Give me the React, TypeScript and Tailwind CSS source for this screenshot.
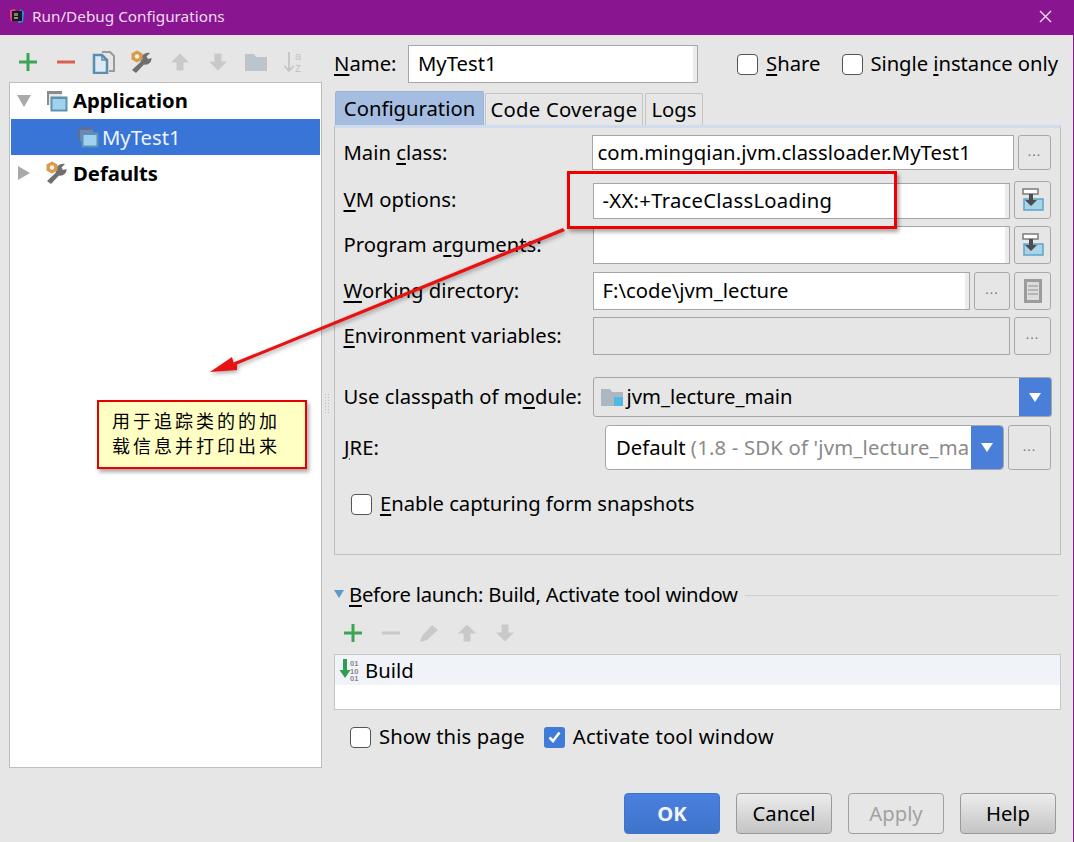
import React from "react";

const U = ({ children }: { children: React.ReactNode }) => <span className="underline underline-offset-[3px]">{children}</span>;

const Plus = ({ c = "#3aa655" }: { c?: string }) => (
  <svg width="20" height="20" viewBox="0 0 20 20"><path d="M1 10h18M10 1v18" stroke={c} strokeWidth="3" /></svg>
);
const Minus = ({ c = "#d9604c" }: { c?: string }) => (
  <svg width="20" height="20" viewBox="0 0 20 20"><path d="M1 10h18" stroke={c} strokeWidth="3" /></svg>
);
const Up = () => (
  <svg width="20" height="20" viewBox="0 0 20 20"><path d="M10 1.500 19 10.500h-5.500v8h-7v-8H1z" fill="#c9c9c9" /></svg>
);
const Down = () => (
  <svg width="20" height="20" viewBox="0 0 20 20"><path d="M10 18.500 19 9.500h-5.500v-8h-7v8H1z" fill="#c9c9c9" /></svg>
);
const Copy = () => (
  <svg width="24" height="24" viewBox="0 0 24 24">
    <path d="M10 2h8l4 4v15h-5" fill="#e6e6e6" stroke="#9a9a9a" strokeWidth="2" />
    <path d="M2 5h8l5 5v13H2z" fill="#dfe9f1" stroke="#5b8db0" strokeWidth="2.500" />
    <path d="M10 5v5h5" fill="none" stroke="#5b8db0" strokeWidth="1.500" />
  </svg>
);
const Wrench = () => (
  <svg width="24" height="24" viewBox="0 0 24 24">
    <path d="M11 10C11 5 15 2 20 3L16.500 6.500 18 9 21.500 8C22 12 18 15.500 14 14.500L6 23 2 20 10.500 12Z" fill="#6f6f6f" />
    <path d="M7 0.500l5.500 3v6l-5.500 3-5.500-3v-6z" fill="#d79b4b" />
    <circle cx="7" cy="6.500" r="2.200" fill="#f4f0e4" />
  </svg>
);
const Folder = ({ c = "#bcc5cc", w = 22, h = 18 }: { c?: string; w?: number; h?: number }) => (
  <svg width={w} height={h} viewBox="0 0 22 18"><path d="M0 1h9l2 3h11v14H0z" fill={c} /></svg>
);
const Sort = () => (
  <svg width="22" height="24" viewBox="0 0 22 24">
    <path d="M6 2v19M1.500 16 6 21l4.500-5" fill="none" stroke="#c4c4c4" strokeWidth="1.800" />
    <text x="12" y="10" fontSize="11" fill="#c4c4c4" fontFamily="Liberation Sans">a</text>
    <text x="12" y="22" fontSize="12" fill="#c4c4c4" fontFamily="Liberation Sans">z</text>
  </svg>
);
const AppIcon = ({ dim }: { dim?: boolean }) => (
  <svg width="22" height="22" viewBox="0 0 22 22">
    <path d="M1 1h15v3H1zM1 4h2v11H1z" fill={dim ? "#5f6f96" : "#8b8b8b"} />
    <rect x="3" y="4" width="13" height="11" fill={dim ? "#6d86bf" : "#e8e8e8"} />
    <rect x="5.500" y="7.500" width="15" height="13" fill="#9fd2ee" stroke="#5f93ad" strokeWidth="2" />
    <path d="M5 7h16v2H5z" fill="#5f93ad" />
  </svg>
);
const Insert = () => (
  <svg width="24" height="24" viewBox="0 0 24 24">
    <rect x="2" y="1" width="15" height="5" fill="#fff" stroke="#7b7b7b" strokeWidth="1.500" />
    <rect x="3" y="11" width="19" height="11" fill="#a8d4ea" stroke="#5da3c9" strokeWidth="1.500" />
    <path d="M8 6h4v6h4l-6 6-6-6h4z" fill="#4d4d4d" />
  </svg>
);
const DocIcon = () => (
  <svg width="18" height="24" viewBox="0 0 18 24">
    <rect x="1.500" y="1.500" width="15" height="21" fill="#dcdcdc" stroke="#9b9b9b" strokeWidth="3" />
    <path d="M4 7h10M4 11h10M4 15h10" stroke="#a8a8a8" strokeWidth="1.500" />
  </svg>
);
const Chevron = () => (
  <svg width="14" height="9" viewBox="0 0 14 9"><path d="M1 0h12L7 9z" fill="#fff" /></svg>
);
const Dots = () => <span className="block text-[13px] leading-none tracking-[1px] text-[#777] -mt-[3px]">...</span>;

const IconBtn = ({ w, children }: { w: string; children: React.ReactNode }) => (
  <div className={`${w} h-full shrink-0 rounded-[3px] border border-[#a8a8a8] bg-[#e6e6e6] flex items-center justify-center`}>{children}</div>
);

const Field = ({ children, disabled, inset }: { children?: React.ReactNode; disabled?: boolean; inset?: boolean }) => (
  <div className={`flex-1 min-w-0 border border-[#a6a6a6] pl-[9px] pb-[2px] flex items-center whitespace-nowrap ${inset ? "h-[36px] mt-[2px] tracking-[0.28px]" : "h-full"} ${disabled ? "bg-[#e6e6e6]" : "bg-white shadow-[inset_-4px_0_0_#ececec]"}`}>{children}</div>
);

const Row = ({ label, h, mt, children }: { label: React.ReactNode; h: string; mt: string; children: React.ReactNode }) => (
  <div className={`flex items-center ${h} ${mt}`}>
    <div className="w-[249px] shrink-0 whitespace-nowrap pb-[2px] -ml-[0.500px]">{label}</div>
    <div className="flex-1 h-full flex gap-[4px] min-w-0">{children}</div>
  </div>
);

const Check = ({ on }: { on?: boolean }) =>
  on ? (
    <span className="w-[21px] h-[21px] rounded-[3px] bg-[#3f7bd9] flex items-center justify-center shrink-0">
      <svg width="13" height="12" viewBox="0 0 13 12"><path d="M1.500 6.500 5 10l6.500-8.500" fill="none" stroke="#fff" strokeWidth="2.500" /></svg>
    </span>
  ) : (
    <span className="w-[21px] h-[21px] rounded-[4px] border border-[#555] bg-white shrink-0" />
  );

const Btn = ({ children, kind }: { children: React.ReactNode; kind?: "ok" | "off" }) => (
  <div
    className={`w-[96px] h-[41px] pb-[2px] rounded-[4px] border flex items-center justify-center ${
      kind === "ok"
        ? "bg-[linear-gradient(#4a80de,#3f74cc)] border-[#3f74cc] text-[#f2f5fb] font-bold"
        : kind === "off"
        ? "bg-[#e6e6e6] border-[#a0a0a0] text-[#a2a2a2]"
        : "bg-[linear-gradient(#ececec,#c4c4c4)] border-[#9a9a9a] text-black"
    }`}
  >
    {children}
  </div>
);

export default function App() {
  return (
    <div
      className="relative w-[1074px] h-[842px] overflow-hidden bg-[#e6e6e6] text-black text-[20.25px] leading-[28px] flex flex-col"
      style={{ fontFamily: '"Noto Sans", "Noto Sans CJK SC", sans-serif' }}
    >
      <div className="h-[35px] shrink-0 bg-[#8a1591] flex items-center pl-[9px] pr-[20px] pb-[3px] text-[15.300px] text-[#f0dcf2]">
        <svg width="16" height="16" viewBox="0 0 16 16" className="mr-[7px]">
          <path d="M1 2l5-1 1 5-5 8-1-6z" fill="#e8467c" />
          <path d="M11 1l4 3-1 10-5 1z" fill="#1b9ae8" />
          <rect x="3" y="3" width="10" height="10" fill="#1a1a1a" />
          <path d="M5 10h4" stroke="#fff" />
          <path d="M6 5v3M8 5v3" stroke="#ddd" />
        </svg>
        <span>Run/Debug Configurations</span>
        <svg width="13" height="13" viewBox="0 0 13 13" className="ml-auto mr-[2px]"><path d="M1 1l11 11M12 1 1 12" stroke="#f3e4f4" strokeWidth="1.400" /></svg>
      </div>

      <div className="flex-1 flex min-h-0 border-r-[1px] border-r-[#8a1591]">
        {/* left */}
        <div className="w-[313px] shrink-0 ml-[9px] flex flex-col pb-[74px]">
          <div className="h-[47px] shrink-0 pt-[6px] flex items-center [&>*]:shrink-0">
            <span className="w-[38px] flex justify-center"><Plus /></span>
            <span className="w-[38px] flex justify-center"><Minus /></span>
            <span className="w-[38px] flex justify-center"><Copy /></span>
            <span className="w-[38px] flex justify-center"><Wrench /></span>
            <span className="w-[38px] flex justify-center"><Up /></span>
            <span className="w-[38px] flex justify-center"><Down /></span>
            <span className="w-[38px] flex justify-center"><Folder /></span>
            <span className="w-[38px] flex justify-center"><Sort /></span>
          </div>
          <div className="flex-1 bg-white border border-[#bdbdbd] pl-[1px] pr-[1px]">
            <div className="h-[36px] flex items-center font-bold">
              <svg width="14" height="12" viewBox="0 0 14 12" className="ml-[6px]"><path d="M0 0h14L7 12z" fill="#a9a9a9" /></svg>
              <span className="ml-[15px] mr-[5px] flex"><AppIcon /></span>
              <span className="pb-[2px]">Application</span>
            </div>
            <div className="h-[36px] flex items-center bg-[#3875d7] text-[#eef4fd]">
              <span className="ml-[66px] mr-[3px] flex"><AppIcon dim /></span>
              <span>MyTest1</span>
            </div>
            <div className="h-[36px] flex items-center font-bold">
              <svg width="12" height="14" viewBox="0 0 12 14" className="ml-[7px]"><path d="M0 0v14l12-7z" fill="#a9a9a9" /></svg>
              <span className="ml-[15px] mr-[4px] flex"><Wrench /></span>
              <span>Defaults</span>
            </div>
          </div>
        </div>

        {/* splitter */}
        <div className="w-[12px] shrink-0 flex items-start pl-[2px] pt-[358px]">
          <div className="w-[6px] h-[22px] bg-[radial-gradient(#bdbdbd_1px,transparent_1px)] bg-[length:3px_3px]" />
        </div>

        {/* right */}
        <div className="w-[727px] shrink-0 flex flex-col">
          <div className="h-[38px] mt-[10px] flex items-center">
            <span className="w-[74px] shrink-0 pb-[2px]"><U>N</U>ame:</span>
            <div className="w-[290px] h-full border border-[#a6a6a6] bg-white shadow-[inset_-4px_0_0_#ececec] pl-[9px] pb-[2px] flex items-center">MyTest1</div>
            <span className="ml-[39px] flex items-center gap-[8px]"><Check /><span className="pb-[2px]"><U>S</U>hare</span></span>
            <span className="ml-[22px] flex items-center gap-[7px] whitespace-nowrap tracking-[-0.05px]"><Check /><span className="pb-[2px]">Single <U>i</U>nstance only</span></span>
          </div>

          <div className="flex items-end h-[34px] mt-[8px] pl-[1px]">
            <div className="w-[149px] h-[34px] pb-[2px] justify-center bg-[#a5bde0] border border-[#9db4d6] border-b-0 rounded-t-[2px] flex items-center">Configuration</div>
            <div className="w-[158px] justify-center h-[32px] pb-[2px] border border-[#c4c4c4] border-b-0 rounded-t-[2px] flex items-center ml-[1px] tracking-[0.25px]">Code Coverage</div>
            <div className="w-[58px] justify-center h-[32px] pb-[2px] border border-[#c4c4c4] border-b-0 rounded-t-[2px] flex items-center ml-[2px]">Logs</div>
          </div>

          <div className="h-[430px] border border-[#bfbfbf] border-t-[3px] border-t-[#cfdcee] pl-[9px] pr-[9px]">
            <Row label={<>Main <U>c</U>lass:</>} h="h-[35px]" mt="mt-[7px]">
              <div className="flex-1 h-full min-w-0 -ml-[1px] border border-[#a6a6a6] bg-white pl-[5px] pb-[2px] flex items-center whitespace-nowrap tracking-[0.1px]">com.mingqian.jvm.classloader.MyTest1</div>
              <IconBtn w="w-[33px]"><Dots /></IconBtn>
            </Row>
            <Row label={<><U>V</U>M options:</>} h="h-[38px]" mt="mt-[11px]">
              <Field inset>-XX:+TraceClassLoading</Field>
              <IconBtn w="w-[37px]"><Insert /></IconBtn>
            </Row>
            <Row label={<>Program a<U>r</U>guments:</>} h="h-[38px]" mt="mt-[7px]">
              <Field />
              <IconBtn w="w-[37px]"><Insert /></IconBtn>
            </Row>
            <Row label={<><U>W</U>orking directory:</>} h="h-[38px]" mt="mt-[8px]">
              <Field>F:\code\jvm_lecture</Field>
              <IconBtn w="w-[36px]"><Dots /></IconBtn>
              <IconBtn w="w-[37px]"><DocIcon /></IconBtn>
            </Row>
            <Row label={<><U>E</U>nvironment variables:</>} h="h-[38px]" mt="mt-[7px]">
              <Field disabled />
              <IconBtn w="w-[37px]"><Dots /></IconBtn>
            </Row>
            <Row label={<>Use classpath of m<U>o</U>dule:</>} h="h-[40px]" mt="mt-[22px]">
              <div className="flex-1 h-full -mr-[1px] rounded-[3px] border border-[#a6a6a6] flex items-center overflow-hidden">
                <span className="ml-[7px] mr-[4px] relative flex">
                  <Folder c="#adb7bf" w={22} h={18} />
                  <span className="absolute right-0 bottom-0 w-[9px] h-[9px] bg-[#4fb8e6]" />
                </span>
                <span className="pb-[2px]">jvm_lecture_main</span>
                <span className="ml-auto w-[32px] h-full bg-[#4a7fd9] flex items-center justify-center"><Chevron /></span>
              </div>
            </Row>
            <div className="flex items-center h-[45px] mt-[8px]">
              <div className="w-[261px] shrink-0 pb-[2px]"><U>J</U>RE:</div>
              <div className="w-[399px] h-full rounded-[4px] border border-[#a6a6a6] bg-white flex items-center overflow-hidden shrink-0">
                <span className="pl-[10px] pb-[2px] flex-1 min-w-0 overflow-hidden whitespace-nowrap">Default <span className="text-[#8a8a8a] tracking-[0.2px]">(1.8 - SDK of 'jvm_lecture_ma</span></span>
                <span className="w-[32px] h-full bg-[#4a7fd9] flex items-center justify-center shrink-0"><Chevron /></span>
              </div>
              <div className="w-[43px] h-full ml-[4px] rounded-[3px] border border-[#a8a8a8] flex items-center justify-center"><Dots /></div>
            </div>
            <div className="flex items-center gap-[8px] h-[28px] mt-[20px] ml-[7px]">
              <Check />
              <span className="pb-[2px] tracking-[-0.05px]"><U>E</U>nable capturing form snapshots</span>
            </div>
          </div>

          <div className="flex items-center h-[28px] mt-[26px]">
            <svg width="10" height="8" viewBox="0 0 10 8" className="mr-[5px] -mt-[3px]"><path d="M0 0h10L5 8z" fill="#5a9cc9" /></svg>
            <span className="whitespace-nowrap tracking-[-0.25px] pb-[2px]"><U>B</U>efore launch: Build, Activate tool window</span>
            <div className="flex-1 h-px bg-[#cfcfcf] ml-[7px] mr-[3px]" />
          </div>

          <div className="flex items-center h-[38px] mt-[5px] pl-[9px] gap-[18px] [&>*]:shrink-0">
            <Plus />
            <Minus c="#c9c9c9" />
            <svg width="20" height="20" viewBox="0 0 20 20"><path d="M1 19l2-6L13 2l6 5L8 17z" fill="#c9c9c9" /></svg>
            <Up />
            <Down />
          </div>

          <div className="h-[56px] mt-[2px] border border-[#c6c6c6] bg-white">
            <div className="h-[30px] bg-[#f0f3f8] flex items-center pl-[3px]">
              <svg width="27" height="24" viewBox="0 0 27 24">
                <path d="M5 1h4v11h3.500L7 20 1.500 12H5z" fill="#2f9e4f" />
                <text x="12" y="8" fontSize="7.500" fontWeight="700" fill="#8a8a8a" fontFamily="Liberation Sans">01</text>
                <text x="12" y="15.500" fontSize="7.500" fontWeight="700" fill="#8a8a8a" fontFamily="Liberation Sans">10</text>
                <text x="12" y="23" fontSize="7.500" fontWeight="700" fill="#8a8a8a" fontFamily="Liberation Sans">01</text>
              </svg>
              <span>Build</span>
            </div>
          </div>

          <div className="flex items-center h-[28px] mt-[13px] pl-[16px]">
            <span className="flex items-center gap-[8px]"><Check /><span className="pb-[2px] tracking-[0.1px]">Show this page</span></span>
            <span className="flex items-center gap-[8px] ml-[19px]"><Check on /><span className="pb-[2px] tracking-[0.2px]">Activate tool window</span></span>
          </div>

          <div className="flex justify-end gap-[16px] mt-[42px] pr-[5px]">
            <Btn kind="ok">OK</Btn>
            <Btn>Cancel</Btn>
            <Btn kind="off">Apply</Btn>
            <Btn>Help</Btn>
          </div>
        </div>
      </div>

      {/* annotations over the dialog */}
      <div className="absolute left-[567px] top-[171px] w-[330px] h-[58px] border-[3px] border-[#f00000] shadow-[2px_3px_4px_rgba(0,0,0,0.35)]" />
      <svg className="absolute left-[200px] top-[220px] drop-shadow-[1px_2px_2px_rgba(0,0,0,0.35)]" width="380" height="165" viewBox="200 220 380 165">
        <path d="M563 228 565 231 237 364.500 237 370 210 372 232 357 233.500 362.500Z" fill="#e81212" />
      </svg>
      <div
        className="absolute left-[97px] top-[400px] w-[210px] h-[69px] border-[2px] border-[#e60000] bg-[#ffffc4] shadow-[2px_3px_4px_rgba(0,0,0,0.35)] pl-[13px] pt-[6px] text-[18px] leading-[25px] tracking-[3px] text-black"
        style={{ fontFamily: '"Noto Sans CJK SC", sans-serif' }}
      >
        用于追踪类的的加
        <br />
        载信息并打印出来
      </div>
    </div>
  );
}
